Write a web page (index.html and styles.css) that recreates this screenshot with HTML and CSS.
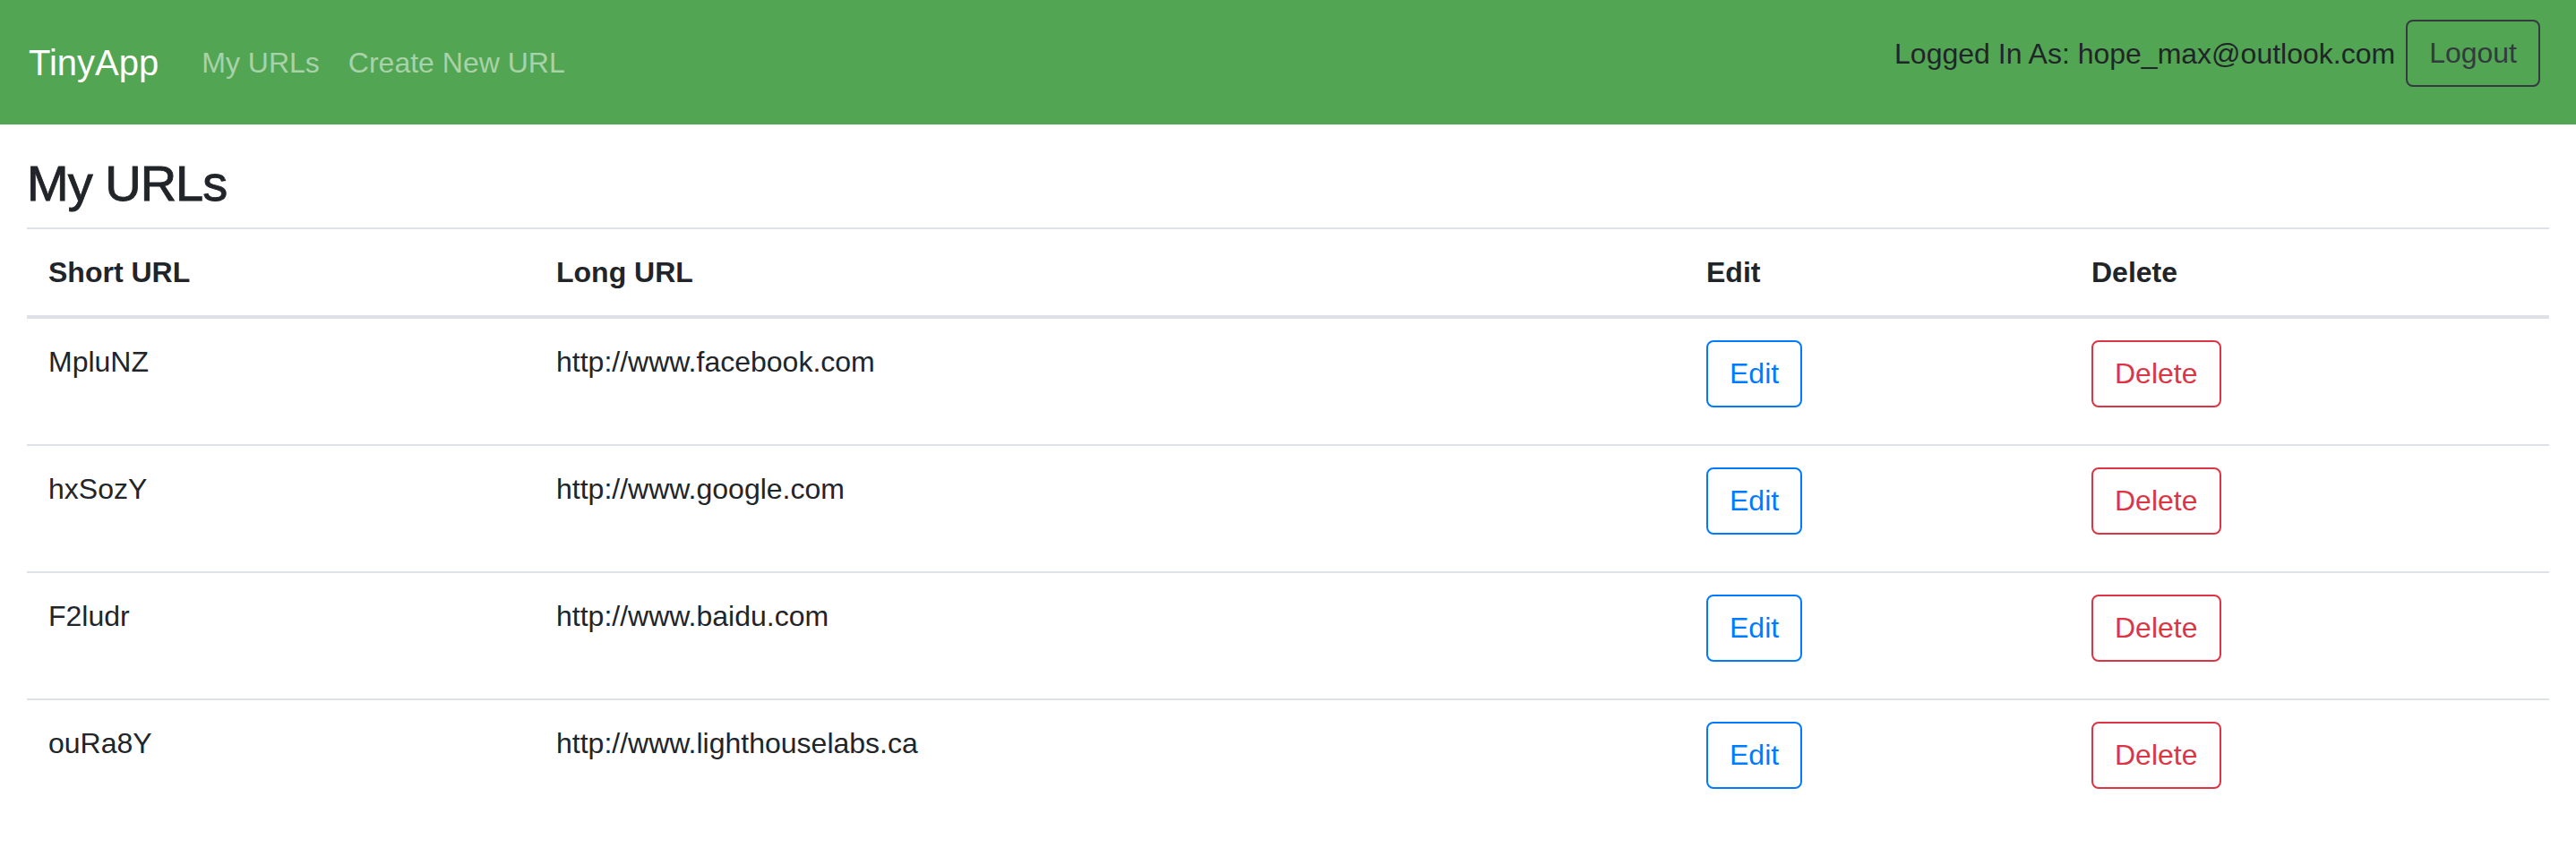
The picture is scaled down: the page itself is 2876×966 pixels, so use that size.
FILE: index.html
```html
<!DOCTYPE html>
<html lang="en">
<head>
<meta charset="utf-8">
<title>TinyApp - My URLs</title>
<link rel="stylesheet" href="styles.css">
</head>
<body>
<nav class="navbar">
  <div class="nav-left">
    <a class="brand" href="#">TinyApp</a>
    <ul class="nav-links">
      <li><a class="nav-link" href="#">My URLs</a></li>
      <li><a class="nav-link" href="#">Create New URL</a></li>
    </ul>
  </div>
  <form class="login-form">
    <span class="user">Logged In As: hope_max@outlook.com</span>
    <button type="button" class="btn btn-dark">Logout</button>
  </form>
</nav>
<main class="container">
  <h3 class="title">My URLs</h3>
  <table class="url-table">
    <thead>
      <tr>
        <th class="col-short">Short URL</th>
        <th class="col-long">Long URL</th>
        <th class="col-edit">Edit</th>
        <th class="col-delete">Delete</th>
      </tr>
    </thead>
    <tbody>
      <tr>
        <td>MpluNZ</td>
        <td>http://www.facebook.com</td>
        <td><form class="action-form"><a class="btn btn-blue" href="#">Edit</a></form></td>
        <td><form class="action-form"><button type="button" class="btn btn-red">Delete</button></form></td>
      </tr>
      <tr>
        <td>hxSozY</td>
        <td>http://www.google.com</td>
        <td><form class="action-form"><a class="btn btn-blue" href="#">Edit</a></form></td>
        <td><form class="action-form"><button type="button" class="btn btn-red">Delete</button></form></td>
      </tr>
      <tr>
        <td>F2ludr</td>
        <td>http://www.baidu.com</td>
        <td><form class="action-form"><a class="btn btn-blue" href="#">Edit</a></form></td>
        <td><form class="action-form"><button type="button" class="btn btn-red">Delete</button></form></td>
      </tr>
      <tr>
        <td>ouRa8Y</td>
        <td>http://www.lighthouselabs.ca</td>
        <td><form class="action-form"><a class="btn btn-blue" href="#">Edit</a></form></td>
        <td><form class="action-form"><button type="button" class="btn btn-red">Delete</button></form></td>
      </tr>
    </tbody>
  </table>
</main>
</body>
</html>
```

FILE: styles.css
```css
* { box-sizing: border-box; }

html, body {
  margin: 0;
  padding: 0;
  background: #ffffff;
}

body {
  font-family: "Liberation Sans", Arial, sans-serif;
  font-size: 32px;
  line-height: 1.5;
  color: #212529;
}

.navbar {
  display: flex;
  align-items: center;
  justify-content: space-between;
  background: #52a552;
  padding: 16px 40px 16px 32px;
}

.nav-left {
  display: flex;
  align-items: center;
}

.brand {
  font-size: 40px;
  line-height: 60px;
  padding: 10px 0;
  margin-right: 32px;
  color: #ffffff;
  text-decoration: none;
}

.nav-links {
  display: flex;
  list-style: none;
  margin: 0;
  padding: 0;
}

.nav-link {
  display: block;
  padding: 16px;
  line-height: 48px;
  color: rgba(255, 255, 255, 0.5);
  text-decoration: none;
}

.login-form {
  display: flex;
  align-items: center;
  gap: 12px;
  margin: 0 0 26px 0;
  padding-top: 6px;
}

.user {
  color: #212529;
  line-height: 48px;
}

.btn {
  display: inline-block;
  font-family: inherit;
  font-size: 32px;
  line-height: 47px;
  padding: 12px 24px;
  border: 2px solid transparent;
  border-radius: 8px;
  background: transparent;
  text-decoration: none;
  cursor: pointer;
}

.btn-dark {
  color: #343a40;
  border-color: #343a40;
}

.btn-blue {
  color: #007bff;
  border-color: #007bff;
}

.btn-red {
  color: #dc3545;
  border-color: #dc3545;
}

.container {
  padding: 32px 30px 0 30px;
}

.title {
  font-size: 56px;
  font-weight: 500;
  line-height: 1.2;
  letter-spacing: -1px;
  -webkit-text-stroke: 0.9px #212529;
  margin: 0 0 16px 0;
}

.url-table {
  width: 100%;
  border-collapse: collapse;
  table-layout: fixed;
}

.url-table th,
.url-table td {
  padding: 24px;
  text-align: left;
  border-top: 2px solid #dee2e6;
}

.url-table th {
  font-weight: 700;
  vertical-align: bottom;
  border-bottom: 4px solid #dee2e6;
}

.url-table td {
  vertical-align: top;
}

.col-short { width: 567px; }
.col-long { width: 1284px; }
.col-edit { width: 430px; }

.action-form {
  display: flex;
  margin: 0 0 17px 0;
}
```
